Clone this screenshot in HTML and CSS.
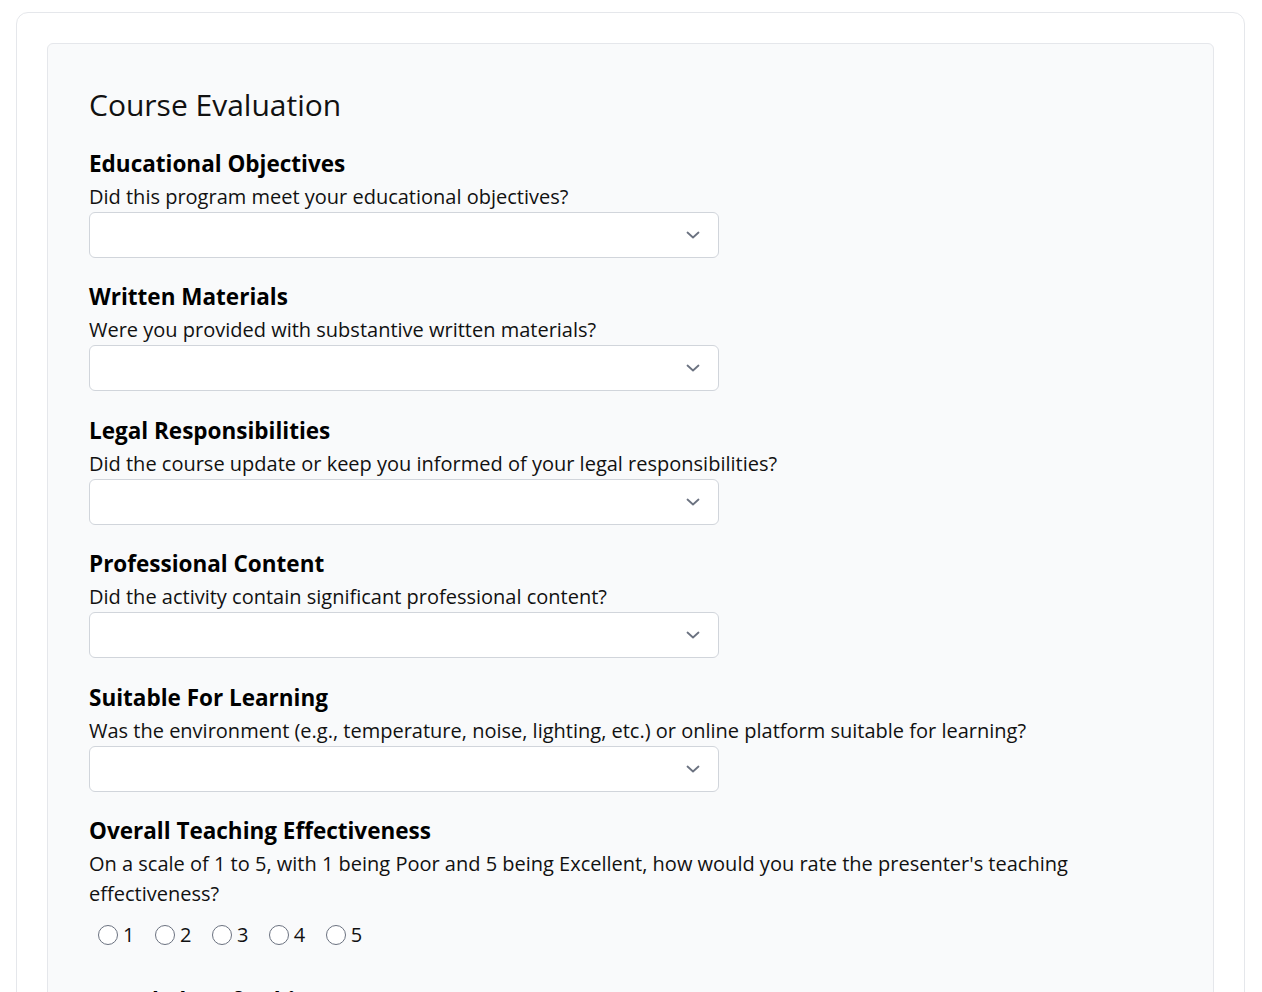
FILE: index.html
```html
<!DOCTYPE html>
<html lang="en">
<head>
<meta charset="utf-8">
<title>Course Evaluation</title>
<link rel="stylesheet" href="styles.css">
</head>
<body>
<div class="card">
  <form class="panel">
    <h1 class="title">Course Evaluation</h1>

    <div class="field">
      <h2 class="label">Educational Objectives</h2>
      <p class="question">Did this program meet your educational objectives?</p>
      <div class="select"><svg class="chev" width="14" height="8" viewBox="0 0 14 8"><path d="M1.5 1.5 L7 6.5 L12.5 1.5" fill="none" stroke="#6b7280" stroke-width="1.8" stroke-linecap="round" stroke-linejoin="round"/></svg></div>
    </div>

    <div class="field">
      <h2 class="label">Written Materials</h2>
      <p class="question">Were you provided with substantive written materials?</p>
      <div class="select"><svg class="chev" width="14" height="8" viewBox="0 0 14 8"><path d="M1.5 1.5 L7 6.5 L12.5 1.5" fill="none" stroke="#6b7280" stroke-width="1.8" stroke-linecap="round" stroke-linejoin="round"/></svg></div>
    </div>

    <div class="field">
      <h2 class="label">Legal Responsibilities</h2>
      <p class="question">Did the course update or keep you informed of your legal responsibilities?</p>
      <div class="select"><svg class="chev" width="14" height="8" viewBox="0 0 14 8"><path d="M1.5 1.5 L7 6.5 L12.5 1.5" fill="none" stroke="#6b7280" stroke-width="1.8" stroke-linecap="round" stroke-linejoin="round"/></svg></div>
    </div>

    <div class="field">
      <h2 class="label">Professional Content</h2>
      <p class="question">Did the activity contain significant professional content?</p>
      <div class="select"><svg class="chev" width="14" height="8" viewBox="0 0 14 8"><path d="M1.5 1.5 L7 6.5 L12.5 1.5" fill="none" stroke="#6b7280" stroke-width="1.8" stroke-linecap="round" stroke-linejoin="round"/></svg></div>
    </div>

    <div class="field">
      <h2 class="label">Suitable For Learning</h2>
      <p class="question">Was the environment (e.g., temperature, noise, lighting, etc.) or online platform suitable for learning?</p>
      <div class="select"><svg class="chev" width="14" height="8" viewBox="0 0 14 8"><path d="M1.5 1.5 L7 6.5 L12.5 1.5" fill="none" stroke="#6b7280" stroke-width="1.8" stroke-linecap="round" stroke-linejoin="round"/></svg></div>
    </div>

    <div class="field">
      <h2 class="label">Overall Teaching Effectiveness</h2>
      <p class="question">On a scale of 1 to 5, with 1 being Poor and 5 being Excellent, how would you rate the presenter's teaching effectiveness?</p>
      <div class="radios">
        <label class="opt"><span class="circle"></span>1</label>
        <label class="opt"><span class="circle"></span>2</label>
        <label class="opt"><span class="circle"></span>3</label>
        <label class="opt"><span class="circle"></span>4</label>
        <label class="opt"><span class="circle"></span>5</label>
      </div>
    </div>

    <div class="field">
      <h2 class="label">Knowledge of Subject Matter</h2>
      <p class="question">On a scale of 1 to 5, with 1 being Poor and 5 being Excellent, how would you rate the presenter's knowledge of the subject matter?</p>
    </div>
  </form>
</div>
</body>
</html>
```

FILE: styles.css
```css
* { box-sizing: border-box; }
html, body { margin: 0; padding: 0; background: #ffffff; }
body {
  font-family: "Open Sans", "Noto Sans", sans-serif;
  color: #111111;
  padding: 12px 17px 0 16px;
}
.card {
  border: 1px solid #e5e7eb;
  border-radius: 12px;
  padding: 30px;
  background: #ffffff;
}
.panel {
  background: #f9fafb;
  border: 1px solid #e5e7eb;
  border-radius: 6px;
  padding: 43px 41px 40px 41px;
}
.title {
  margin: 0 0 23.5px 0;
  font-size: 30px;
  line-height: 36px;
  font-weight: 400;
  color: #111111;
}
.field { margin-bottom: 22.5px; }
.label {
  margin: 0 0 2px 0;
  font-size: 22.5px;
  line-height: 33px;
  font-weight: 700;
  color: #000000;
}
.question {
  margin: 0;
  font-size: 20px;
  line-height: 30px;
  color: #111111;
}
.select {
  width: 630px;
  height: 46px;
  background: #ffffff;
  border: 1px solid #d1d5db;
  border-radius: 6px;
  display: flex;
  align-items: center;
  justify-content: flex-end;
  padding-right: 18px;
}
.chev { display: block; }
.radios {
  display: flex;
  gap: 20.5px;
  padding: 12px 0 12px 9px;
}
.opt {
  display: flex;
  align-items: center;
  gap: 5px;
  font-size: 20px;
  line-height: 28px;
  color: #111111;
}
.circle {
  width: 20px;
  height: 20px;
  border: 1px solid #6b7280;
  border-radius: 50%;
  background: #ffffff;
  display: block;
}
```
